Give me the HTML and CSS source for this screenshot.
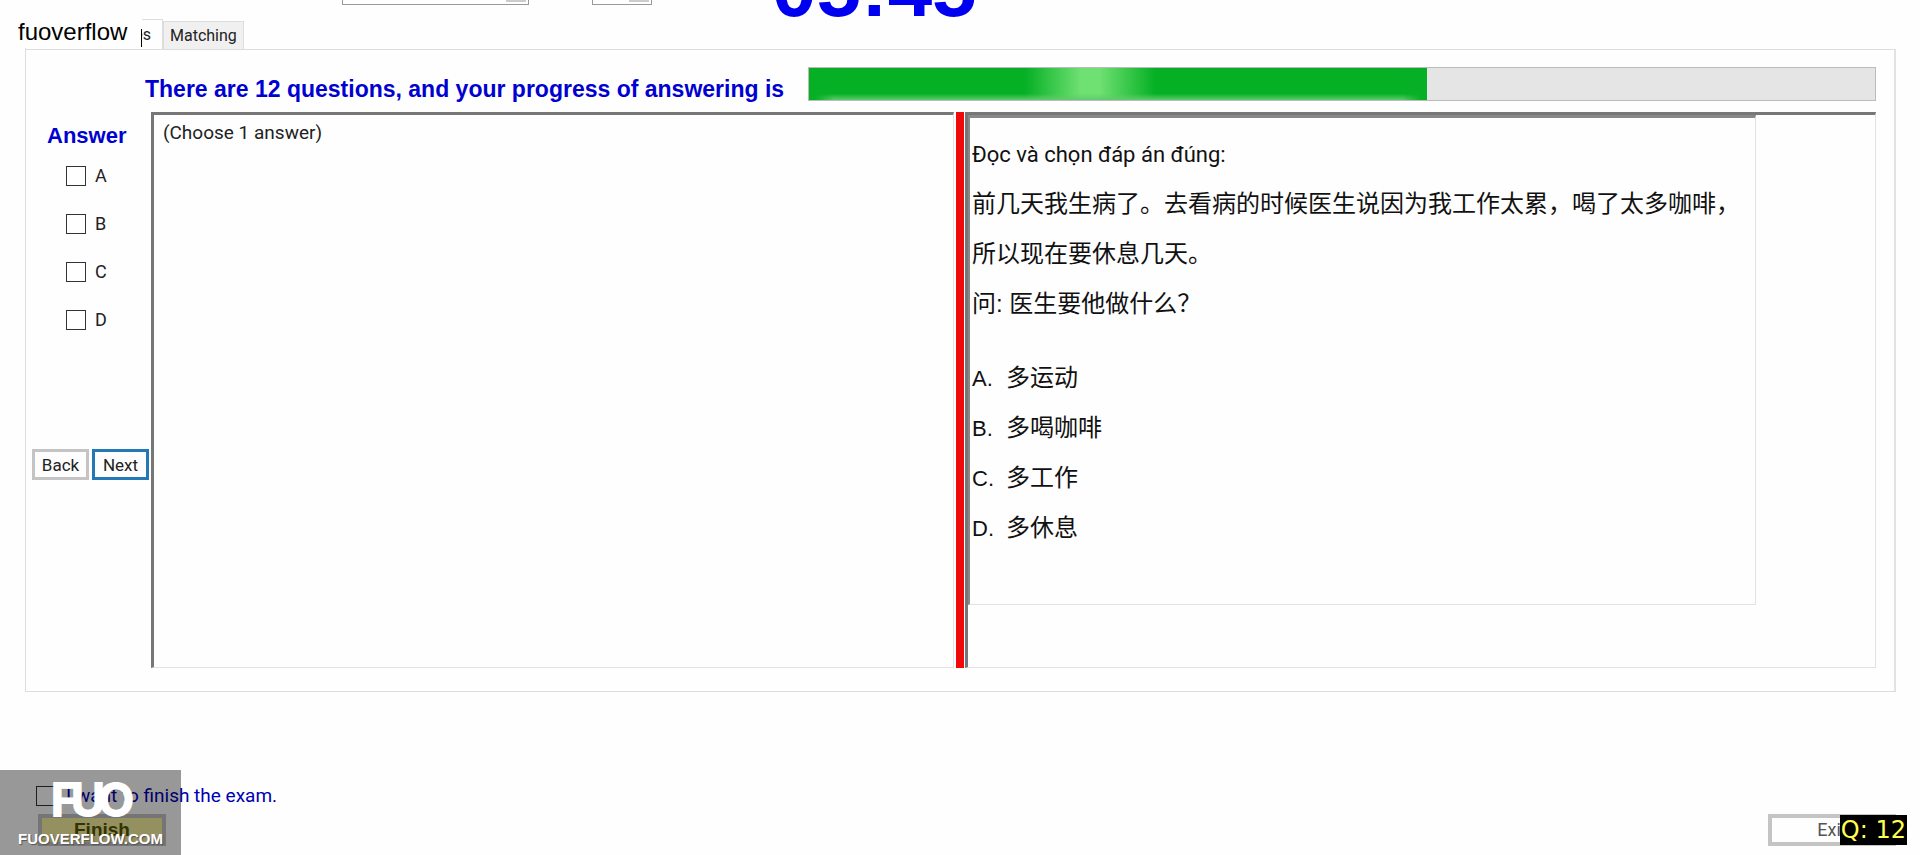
FILE: index.html
```
<!DOCTYPE html>
<html lang="vi">
  <head>
    <title>Exam</title>
    <meta charset="UTF-8">
    <meta name="viewport" content="width=device-width, initial-scale=1.0">
    <link rel="stylesheet" href="styles.css">
  </head>
  <body>
    <header>
      <input type="text" class="field" aria-label="Font">
      <input type="text" class="field size" aria-label="Size">
      <div class="timer">05:45</div>
    </header>

    <nav class="tabs">
      <button type="button" class="tab active">Multiple Choices</button>
      <button type="button" class="tab">Matching</button>
    </nav>

    <main>
      <div class="progress-row">
        <label for="progress">There are 12 questions, and your progress of answering is</label>
        <progress id="progress" value="58" max="100"></progress>
      </div>

      <div class="exam">
        <form class="answers">
          <h2>Answer</h2>
          <label><input type="checkbox" name="a">A</label>
          <label><input type="checkbox" name="b">B</label>
          <label><input type="checkbox" name="c">C</label>
          <label><input type="checkbox" name="d">D</label>
          <div class="nav-buttons">
            <button type="button">Back</button>
            <button type="button" class="next">Next</button>
          </div>
        </form>

        <section class="pane choose">(Choose 1 answer)</section>
        <div class="splitter"></div>
        <section class="pane question">
          <div class="sheet" lang="zh-CN">
            <p class="intro" lang="vi">Đọc và chọn đáp án đúng:</p>
            <p>前几天我生病了。去看病的时候医生说因为我工作太累，喝了太多咖啡，</p>
            <p>所以现在要休息几天。</p>
            <p>问: 医生要他做什么？</p>
            <ul>
              <li><span>A.</span>多运动</li>
              <li><span>B.</span>多喝咖啡</li>
              <li><span>C.</span>多工作</li>
              <li><span>D.</span>多休息</li>
            </ul>
          </div>
        </section>
      </div>
    </main>

    <footer>
      <div class="finish">
        <label><input type="checkbox" name="finish">I want to finish the exam.</label>
        <button type="button" class="finish-button">Finish</button>
      </div>
      <button type="button" class="exit">Exit</button>
    </footer>

    <div class="user-tag">fuoverflow</div>
    <div class="watermark">
      <div class="logo"><span>F</span><span>U</span><span>O</span></div>
      <div class="site">FUOVERFLOW.COM</div>
    </div>
    <div class="counter">Q: 12</div>
  </body>
</html>
```
FILE: styles.css
```
* {
  box-sizing: border-box;
  margin: 0;
  padding: 0;
}

body {
  position: relative;
  display: flex;
  flex-direction: column;
  min-height: 100vh;
  font-family: Roboto, "Liberation Sans", sans-serif;
  font-size: 19px;
  line-height: 24px;
  color: #222;
  background-color: #fefefe;
}

button, input {
  font: inherit;
  color: inherit;
}

header {
  display: flex;
  align-items: flex-end;
  height: 20px;
  padding-left: 342px;
  overflow: hidden;
}

.field {
  width: 187px;
  height: 24px;
  margin-bottom: 15px;
  border: 1px solid #999;
  background: linear-gradient(#ccc, #ccc) no-repeat right 2px bottom 2px / 20px 20px #fff;
}

.size {
  width: 60px;
  margin-left: 63px;
}

.timer {
  margin-left: 120px;
  font-family: "Liberation Sans", sans-serif;
  font-size: 80px;
  font-weight: bold;
  line-height: 62px;
  color: #0000f0;
}

.tabs {
  display: flex;
  align-items: flex-end;
  height: 29px;
  padding-left: 25px;
}

.tab {
  height: 28px;
  padding: 0 6px;
  font-size: 16px;
  border: 1px solid #ddd;
  border-bottom: none;
  background-color: #f0f0f0;
}

.tab.active {
  width: 138px;
  height: 30px;
  padding-right: 11px;
  text-align: right;
  white-space: nowrap;
  overflow: hidden;
  background-color: #fefefe;
}

main {
  display: flex;
  flex: 1;
  flex-direction: column;
  margin: 0 24px 0 25px;
  padding: 17px 18px 23px 0;
  border: 1px solid #ddd;
  border-right: 2px solid #e2e2e2;
}

.progress-row {
  display: flex;
  align-items: center;
  margin-bottom: 11px;
  padding-left: 119px;
}

.progress-row label {
  width: 663px;
  padding-top: 10px;
  font-size: 23px;
  white-space: nowrap;
}

.progress-row label, h2 {
  font-family: "Liberation Sans", sans-serif;
  font-weight: bold;
  color: #0000d0;
}

progress {
  flex: 1;
  height: 34px;
  border: 1px solid #bbb;
  background-color: #e5e5e5;
  -webkit-appearance: none;
  appearance: none;
}

progress::-webkit-progress-bar {
  background-color: #e5e5e5;
}

progress::-webkit-progress-value {
  background:
    linear-gradient(90deg, #06b025 1%, transparent 4%, transparent 96%, #06b025 99%),
    linear-gradient(transparent 80%, #5fcb6c),
    linear-gradient(90deg, #06b025 35%, #6fe072 44%, #6fe072 47%, #06b025 56%);
}

.exam {
  display: flex;
  flex: 1;
}

.answers {
  display: flex;
  flex-direction: column;
  width: 125px;
  padding-top: 12px;
}

h2 {
  margin-bottom: 14px;
  padding-left: 21px;
  font-size: 22px;
}

.answers label {
  display: flex;
  align-items: center;
  gap: 9px;
  height: 28px;
  margin-bottom: 20px;
  padding-left: 40px;
  font-size: 18px;
}

input[type=checkbox] {
  width: 20px;
  height: 20px;
  border: 1px solid #333;
  background-color: #fff;
  -webkit-appearance: none;
  appearance: none;
}

input[type=checkbox]:checked {
  background-color: #333;
}

.nav-buttons {
  display: flex;
  gap: 3px;
  margin-top: 95px;
  padding-left: 6px;
}

.nav-buttons button {
  width: 57px;
  height: 31px;
  font-size: 17px;
  border: 3px solid #c4c4c4;
  background-color: #fdfdfd;
}

.nav-buttons .next {
  border-color: #2378b5;
}

.pane {
  border: 1px solid #e2e2e2;
  border-top: 3px solid #777;
  border-left: 3px solid #777;
}

.choose {
  width: 803px;
  padding: 6px 9px;
}

.splitter {
  width: 8px;
  margin: 0 1px 0 2px;
  background-color: #ee0a0a;
}

.question {
  flex: 1;
}

.sheet {
  width: 788px;
  max-width: 100%;
  min-height: 490px;
  padding: 12px 2px;
  border: 1px solid #e2e2e2;
  border-top: 3px solid #888;
  border-left: 2px solid #888;
  font-family: "Liberation Sans", "Noto Sans CJK SC", sans-serif;
  font-size: 24px;
  line-height: 50px;
  color: #111;
}

.sheet .intro {
  height: 49px;
  font-family: Roboto, "Liberation Sans", sans-serif;
  font-size: 22px;
}

.sheet ul {
  margin-top: 24px;
  list-style: none;
}

.sheet li {
  height: 50px;
}

.sheet li span {
  display: inline-block;
  width: 34px;
  font-size: 22px;
}

footer {
  display: flex;
  justify-content: space-between;
  align-items: flex-end;
  height: 163px;
  padding: 0 24px 9px 36px;
}

.finish label {
  display: flex;
  align-items: center;
  gap: 10px;
  margin-bottom: 6px;
  color: #0000b4;
}

.finish-button, .exit {
  display: block;
  width: 128px;
  height: 32px;
  border: 4px solid #c4c4c4;
  background-color: #fefefe;
}

.finish-button {
  margin-left: 2px;
  font-family: "Liberation Sans", sans-serif;
  font-weight: bold;
  line-height: 22px;
  color: #555500;
  background-color: #f8f09e;
}

.exit {
  font-size: 18px;
  color: #555;
}

/* overlays */
.user-tag {
  position: absolute;
  top: 18px;
  left: 0;
  width: 142px;
  height: 30px;
  padding-left: 18px;
  font-family: "Liberation Sans", sans-serif;
  font-size: 24px;
  line-height: 28px;
  color: #000;
  background: linear-gradient(#000, #000) no-repeat right 11px / 1px 18px #fefefe;
}

.watermark {
  position: absolute;
  bottom: 0;
  left: 0;
  width: 181px;
  height: 85px;
  padding-top: 10px;
  text-align: center;
  color: #fff;
  background-color: rgba(0, 0, 0, 0.4);
}

.logo {
  display: flex;
  justify-content: center;
  padding-left: 4px;
  font-family: Inter, sans-serif;
  font-size: 48px;
  font-weight: 800;
  line-height: 40px;
}

.logo span + span {
  margin-left: -8px;
}

.site {
  margin-top: 7px;
  font-family: "Liberation Sans", sans-serif;
  font-size: 15px;
  font-weight: bold;
  text-shadow: 1px 1px 1px #555;
}

.counter {
  position: absolute;
  right: 13px;
  bottom: 10px;
  padding: 0 1px;
  font-family: "DejaVu Sans", sans-serif;
  line-height: 30px;
  font-size: 24px;
  color: #ffff4f;
  background-color: #000;
}
```
